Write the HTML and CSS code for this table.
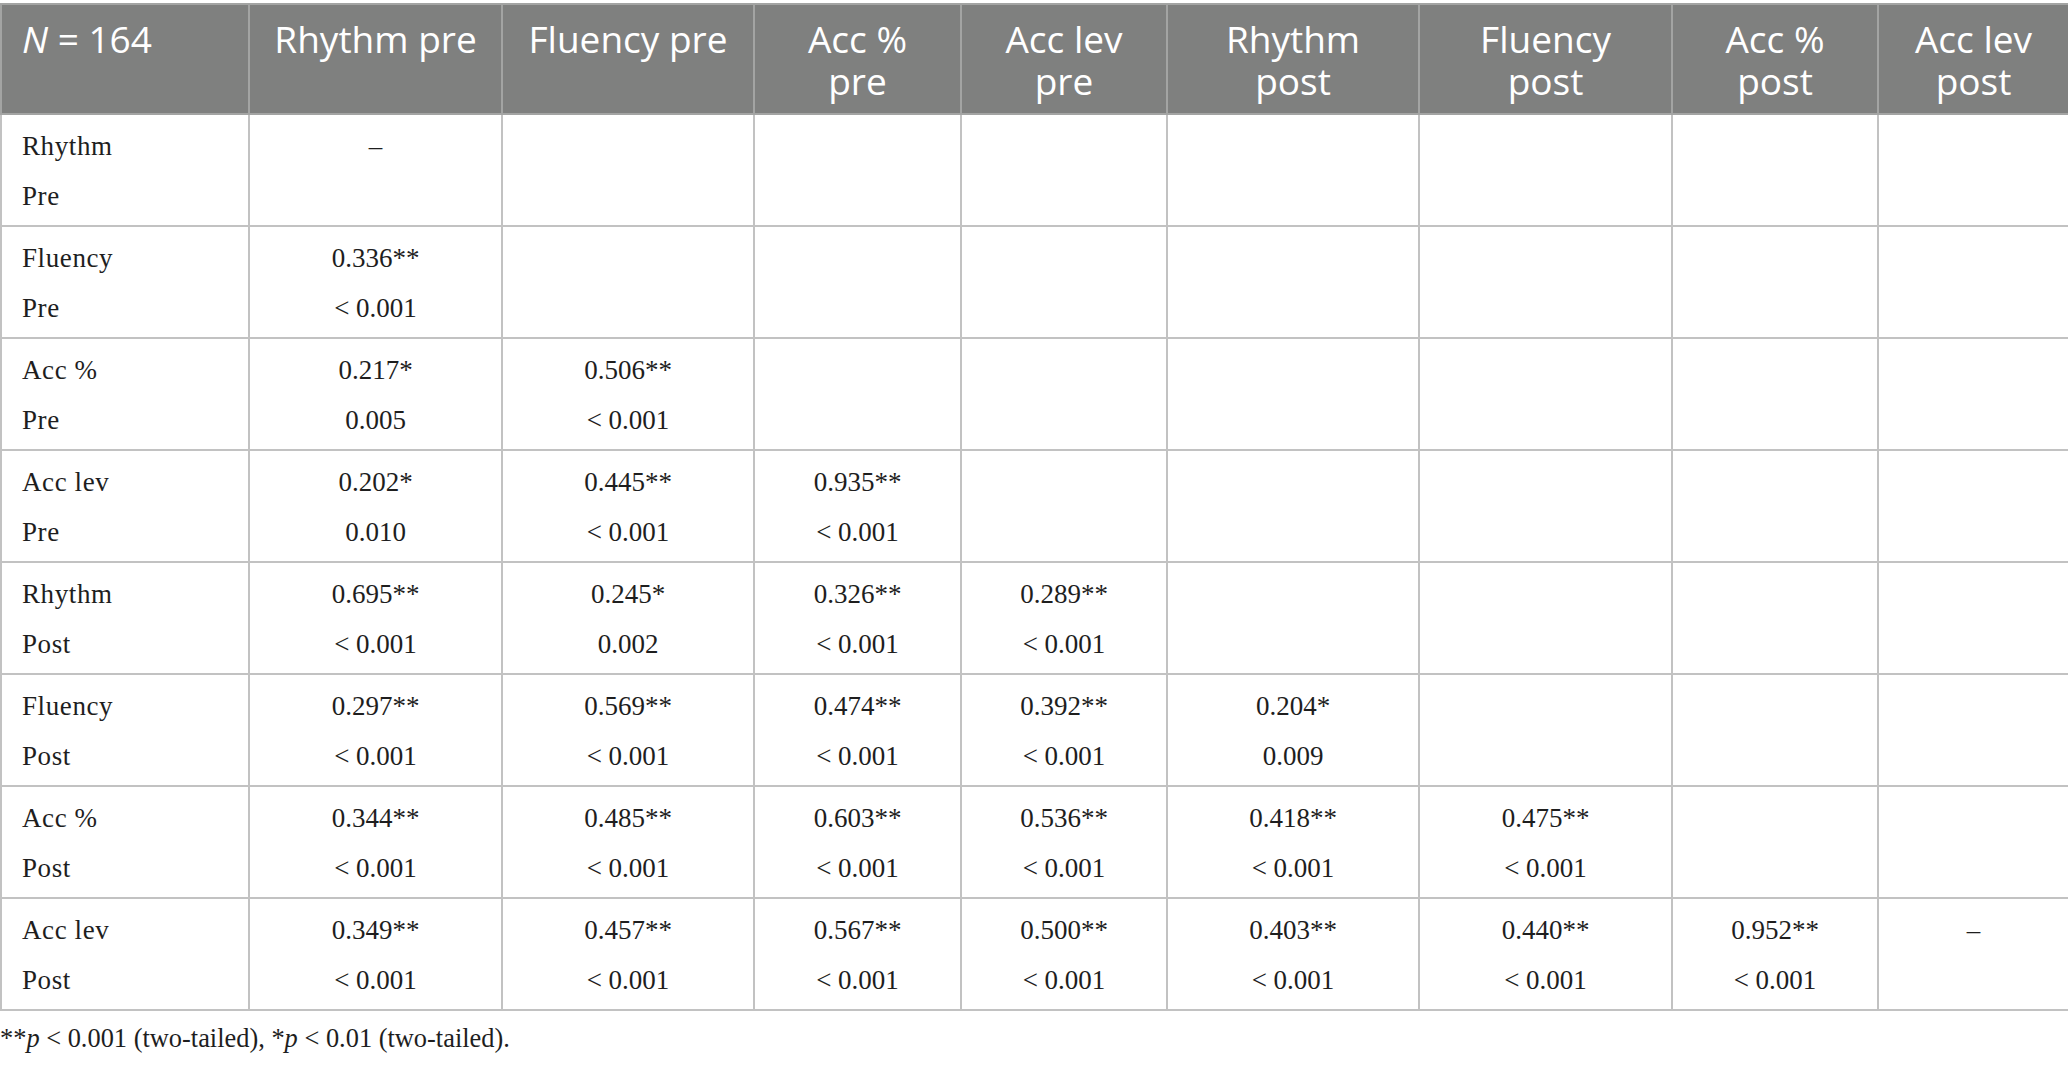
FILE: index.html
```html
<!DOCTYPE html>
<html>
<head>
<meta charset="utf-8">
<link rel="stylesheet" href="styles.css">
</head>
<body>
<table class="corr">
  <colgroup>
    <col class="c0"><col class="c1"><col class="c2"><col class="c3"><col class="c4"><col class="c5"><col class="c6"><col class="c7"><col class="c8">
  </colgroup>
  <thead>
    <tr>
      <th class="first"><i>N</i> = 164</th>
      <th>Rhythm pre</th>
      <th>Fluency pre</th>
      <th>Acc %<br>pre</th>
      <th>Acc lev<br>pre</th>
      <th>Rhythm<br>post</th>
      <th>Fluency<br>post</th>
      <th>Acc %<br>post</th>
      <th>Acc lev<br>post</th>
    </tr>
  </thead>
  <tbody>
    <tr>
      <td class="label">Rhythm<br>Pre</td>
      <td>–</td><td></td><td></td><td></td><td></td><td></td><td></td><td></td>
    </tr>
    <tr>
      <td class="label">Fluency<br>Pre</td>
      <td>0.336**<br>&lt; 0.001</td><td></td><td></td><td></td><td></td><td></td><td></td><td></td>
    </tr>
    <tr>
      <td class="label">Acc %<br>Pre</td>
      <td>0.217*<br>0.005</td><td>0.506**<br>&lt; 0.001</td><td></td><td></td><td></td><td></td><td></td><td></td>
    </tr>
    <tr>
      <td class="label">Acc lev<br>Pre</td>
      <td>0.202*<br>0.010</td><td>0.445**<br>&lt; 0.001</td><td>0.935**<br>&lt; 0.001</td><td></td><td></td><td></td><td></td><td></td>
    </tr>
    <tr>
      <td class="label">Rhythm<br>Post</td>
      <td>0.695**<br>&lt; 0.001</td><td>0.245*<br>0.002</td><td>0.326**<br>&lt; 0.001</td><td>0.289**<br>&lt; 0.001</td><td></td><td></td><td></td><td></td>
    </tr>
    <tr>
      <td class="label">Fluency<br>Post</td>
      <td>0.297**<br>&lt; 0.001</td><td>0.569**<br>&lt; 0.001</td><td>0.474**<br>&lt; 0.001</td><td>0.392**<br>&lt; 0.001</td><td>0.204*<br>0.009</td><td></td><td></td><td></td>
    </tr>
    <tr>
      <td class="label">Acc %<br>Post</td>
      <td>0.344**<br>&lt; 0.001</td><td>0.485**<br>&lt; 0.001</td><td>0.603**<br>&lt; 0.001</td><td>0.536**<br>&lt; 0.001</td><td>0.418**<br>&lt; 0.001</td><td>0.475**<br>&lt; 0.001</td><td></td><td></td>
    </tr>
    <tr>
      <td class="label">Acc lev<br>Post</td>
      <td>0.349**<br>&lt; 0.001</td><td>0.457**<br>&lt; 0.001</td><td>0.567**<br>&lt; 0.001</td><td>0.500**<br>&lt; 0.001</td><td>0.403**<br>&lt; 0.001</td><td>0.440**<br>&lt; 0.001</td><td>0.952**<br>&lt; 0.001</td><td>–</td>
    </tr>
  </tbody>
</table>
<p class="note">**<i>p</i> &lt; 0.001 (two-tailed), *<i>p</i> &lt; 0.01 (two-tailed).</p>
</body>
</html>
```

FILE: styles.css
```css
html, body {
  margin: 0;
  padding: 0;
  background: #ffffff;
}

body {
  font-family: "Liberation Serif", "Times New Roman", serif;
  color: #1e1e1e;
}

.corr {
  width: 2068px;
  table-layout: fixed;
  border-collapse: collapse;
  margin-top: 3px;
}

.c0 { width: 248px; }
.c1 { width: 253px; }
.c2 { width: 252px; }
.c3 { width: 207px; }
.c4 { width: 206px; }
.c5 { width: 252px; }
.c6 { width: 253px; }
.c7 { width: 206px; }
.c8 { width: 191px; }

.corr th {
  background: #7f807f;
  color: #ffffff;
  font-family: "Open Sans", "Noto Sans", sans-serif;
  font-weight: 400;
  font-size: 37px;
  line-height: 42px;
  text-align: center;
  vertical-align: top;
  padding: 13px 6px 11px;
  height: 84px;
  border: 2px solid #a3a4a3;
}

.corr th.first {
  text-align: left;
  padding-left: 20px;
}

.corr td {
  font-size: 27px;
  line-height: 50px;
  text-align: center;
  vertical-align: top;
  padding: 6px 8px 4px;
  height: 100px;
  border: 2px solid #c2c2c2;
}

.corr td.label {
  text-align: left;
  padding-left: 20px;
  letter-spacing: 0.6px;
}

.note {
  margin: 12px 0 0;
  font-size: 26.4px;
  line-height: 31px;
  color: #1e1e1e;
}
```
